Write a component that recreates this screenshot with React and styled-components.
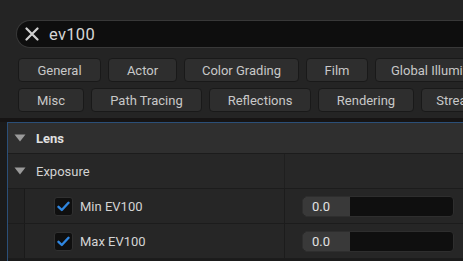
import React from "react";
import styled, { createGlobalStyle } from "styled-components";

const GlobalStyle = createGlobalStyle`
  html, body {
    margin: 0;
    padding: 0;
    background: #1d1d1d;
    overflow: hidden;
  }
  body {
    font-family: Roboto, "Liberation Sans", sans-serif;
  }
`;

const Page = styled.div`
  width: 463px;
  height: 261px;
  background: #242424;
  display: flex;
  flex-direction: column;
  overflow: hidden;
`;

const Top = styled.div`
  padding: 20px 0 0 16px;
`;

const SearchBox = styled.div`
  height: 26px;
  display: flex;
  align-items: center;
  background: #0e0e0e;
  border: 1px solid #383838;
  border-right: none;
  border-radius: 14px 0 0 14px;
  padding-left: 8px;
  gap: 10px;
`;

const SearchText = styled.span`
  color: #d6d6d6;
  font-size: 16.5px;
  letter-spacing: 0.3px;
`;

const Filters = styled.div`
  display: flex;
  flex-direction: column;
  gap: 6px;
  padding: 10px 0 0 18px;
`;

const FilterRow = styled.div`
  display: flex;
  gap: 7px;
  white-space: nowrap;
`;

const FilterButton = styled.div`
  flex: none;
  width: ${(p) => p.w}px;
  height: 24px;
  box-sizing: border-box;
  display: flex;
  align-items: center;
  justify-content: center;
  background: #2e2e2e;
  border: 1px solid #191919;
  border-radius: 4px;
  color: #c8c8c8;
  font-size: 13px;
  overflow: hidden;
`;

const Panel = styled.div`
  margin-top: 6px;
  flex: 1;
  display: flex;
  background: #1b1b1b;
  border-top: 4px solid #161414;
`;

const Frame = styled.div`
  margin-left: 7px;
  flex: 1;
  border-left: 1px solid #2b4f78;
  border-top: 1px solid #2b4f78;
  display: flex;
  flex-direction: column;
`;

const CategoryRow = styled.div`
  height: 30px;
  flex: none;
  display: flex;
  align-items: center;
  background: #2f2f2f;
  border-bottom: 1px solid #1c1c1c;
  padding-left: 6px;
  gap: 10px;
  color: #e0e0e0;
  font-size: 13px;
  font-weight: 700;
`;

const GroupRow = styled.div`
  height: 34px;
  flex: none;
  display: grid;
  grid-template-columns: 277px 1fr;
  background: #272727;
  border-bottom: 1px solid #1c1c1c;
`;

const GroupName = styled.div`
  display: flex;
  align-items: center;
  gap: 10px;
  padding-left: 6px;
  color: #d2d2d2;
  font-size: 13px;
  border-right: 1px solid #1f1f1f;
`;

const PropRow = styled.div`
  height: 34px;
  flex: none;
  display: grid;
  grid-template-columns: 17px 260px 1fr;
  border-bottom: 1px solid #1c1c1c;
  background: #262626;
`;

const Gutter = styled.div`
  background: #232323;
  border-right: 1px solid #1a1a1a;
`;

const NameCell = styled.div`
  display: flex;
  align-items: center;
  padding-left: 29px;
  gap: 7px;
  color: #d4d4d4;
  font-size: 13px;
  border-right: 1px solid #1c1c1c;
`;

const ValueCell = styled.div`
  display: flex;
  align-items: center;
  padding-left: 17px;
`;

const Checkbox = styled.div`
  width: 19px;
  height: 19px;
  box-sizing: border-box;
  border-radius: 3px;
  background: #0f0f0f;
  border: 1px solid #303030;
  display: flex;
  align-items: center;
  justify-content: center;
`;

const NumberBox = styled.div`
  width: 152px;
  height: 21px;
  box-sizing: border-box;
  display: flex;
  background: #0f0f0f;
  border: 1px solid #2e2e2e;
  border-radius: 4px;
  overflow: hidden;
`;

const NumberFill = styled.div`
  width: 47px;
  background: #393939;
  border-radius: 3px 0 0 3px;
  color: #e2e2e2;
  font-size: 13px;
  display: flex;
  align-items: center;
  padding-left: 9px;
  box-sizing: border-box;
`;

const Arrow = () => (
  <svg width="12" height="8" viewBox="0 0 12 8">
    <path d="M0.5 0.5 L11.5 0.5 L6 7.5 Z" fill="#9a9a9a" />
  </svg>
);

const Close = () => (
  <svg width="14" height="14" viewBox="0 0 14 14">
    <path d="M1.5 1.5 L12.5 12.5 M12.5 1.5 L1.5 12.5" stroke="#d0d0d0" strokeWidth="2.2" strokeLinecap="round" />
  </svg>
);

const Check = () => (
  <svg width="13" height="11" viewBox="0 0 13 11">
    <path d="M1.5 5.8 L4.8 9 L11.5 1.8" stroke="#2f86e0" strokeWidth="2.4" fill="none" strokeLinecap="round" strokeLinejoin="round" />
  </svg>
);

const rowOne = [
  ["General", 83],
  ["Actor", 69],
  ["Color Grading", 115],
  ["Film", 62],
  ["Global Illumination", 140],
];

const rowTwo = [
  ["Misc", 66],
  ["Path Tracing", 111],
  ["Reflections", 102],
  ["Rendering", 96],
  ["Streaming", 90],
];

const Property = ({ label }) => (
  <PropRow>
    <Gutter />
    <NameCell>
      <Checkbox>
        <Check />
      </Checkbox>
      {label}
    </NameCell>
    <ValueCell>
      <NumberBox>
        <NumberFill>0.0</NumberFill>
      </NumberBox>
    </ValueCell>
  </PropRow>
);

const App = () => {
  return (
    <Page>
      <GlobalStyle />
      <Top>
        <SearchBox>
          <Close />
          <SearchText>ev100</SearchText>
        </SearchBox>
      </Top>
      <Filters>
        <FilterRow>
          {rowOne.map(([name, w]) => (
            <FilterButton key={name} w={w}>{name}</FilterButton>
          ))}
        </FilterRow>
        <FilterRow>
          {rowTwo.map(([name, w]) => (
            <FilterButton key={name} w={w}>{name}</FilterButton>
          ))}
        </FilterRow>
      </Filters>
      <Panel>
        <Frame>
          <CategoryRow>
            <Arrow />
            Lens
          </CategoryRow>
          <GroupRow>
            <GroupName>
              <Arrow />
              Exposure
            </GroupName>
            <div />
          </GroupRow>
          <Property label="Min EV100" />
          <Property label="Max EV100" />
        </Frame>
      </Panel>
    </Page>
  );
};

export default App;
